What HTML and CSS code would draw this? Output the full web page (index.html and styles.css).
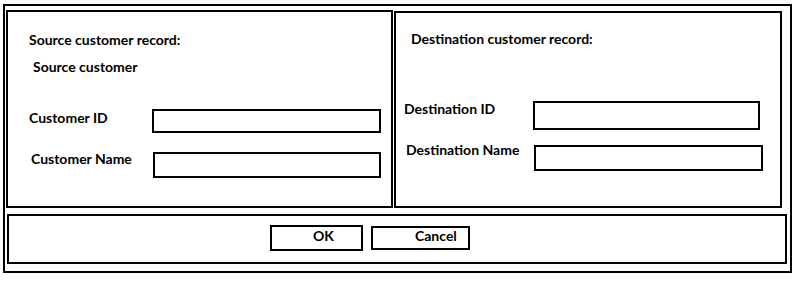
FILE: index.html
```html
<!DOCTYPE html>
<html lang="en">
<head>
<meta charset="UTF-8" />
<title>Merge customer records</title>
<link rel="stylesheet" href="styles.css">
</head>
<body>

<div class="dialog">
  <div class="panels">
    <div class="panel source">
      <div class="title">Source customer record:</div>
      <div class="subtitle">Source customer</div>
      <div class="row row-id">
        <label for="cust-id">Customer ID</label>
        <input type="text" id="cust-id">
      </div>
      <div class="row row-name">
        <label for="cust-name">Customer Name</label>
        <input type="text" id="cust-name">
      </div>
    </div>

    <div class="panel dest">
      <div class="title">Destination customer record:</div>
      <div class="row row-id">
        <label for="dest-id">Destination ID</label>
        <input type="text" id="dest-id">
      </div>
      <div class="row row-name">
        <label for="dest-name">Destination Name</label>
        <input type="text" id="dest-name">
      </div>
    </div>
  </div>

  <div class="actions">
    <button class="btn btn-ok">OK</button>
    <button class="btn btn-cancel">Cancel</button>
  </div>
</div>

</body>
</html>
```

FILE: styles.css
```css
* {
  box-sizing: border-box;
}
body {
  margin: 0;
  background: #fff;
  color: #000;
  font-family: 'Lato', 'Liberation Sans', sans-serif;
  font-weight: 700;
  font-size: 14px;
  line-height: 16px;
}
.dialog {
  width: 789px;
  height: 269px;
  margin: 4px 0 0 3px;
  border: 2px solid #000;
}
.panels {
  display: flex;
  align-items: flex-start;
}
.panel {
  border: 2px solid #000;
}
.source {
  width: 387px;
  height: 198px;
  margin: 4px 0 0 1px;
}
.dest {
  width: 388px;
  height: 197px;
  margin: 5px 0 0 1px;
}

.source .title {
  margin-top: 20px;
  padding-left: 21px;
}
.subtitle {
  margin-top: 11px;
  padding-left: 25px;
}
.dest .title {
  margin-top: 18px;
  padding-left: 15px;
}

.row {
  display: flex;
  align-items: flex-start;
}
.row input {
  border: 2px solid #000;
  background: #fff;
  padding: 0;
  margin: 0;
  font: inherit;
}

.source .row-id {
  margin-top: 34px;
  padding-left: 21px;
}
.source .row-id label {
  width: 123px;
  margin-top: 1px;
}
.source .row-id input {
  width: 229px;
  height: 24px;
}
.source .row-name {
  margin-top: 18px;
  padding-left: 23px;
}
.source .row-name label {
  width: 122px;
}
.source .row-name input {
  width: 228px;
  height: 26px;
  margin-top: 1px;
}

.dest .row-id {
  margin-top: 54px;
  padding-left: 8px;
}
.dest .row-id label {
  width: 129px;
}
.dest .row-id input {
  width: 227px;
  height: 29px;
}
.dest .row-name {
  margin-top: 12px;
  padding-left: 10px;
}
.dest .row-name label {
  width: 128px;
}
.dest .row-name input {
  width: 229px;
  height: 26px;
  margin-top: 3px;
}

.actions {
  display: flex;
  align-items: flex-start;
  width: 780px;
  height: 50px;
  margin: 6px 0 0 2px;
  border: 2px solid #000;
}
.btn {
  font: inherit;
  color: #000;
  background: #fff;
  border: 2px solid #000;
  border-radius: 0;
  text-align: left;
  padding: 0 0 4px 0;
  cursor: pointer;
}
.btn-ok {
  width: 93px;
  height: 26px;
  margin: 9px 0 0 261px;
  padding-left: 41px;
}
.btn-cancel {
  width: 99px;
  height: 24px;
  margin: 10px 0 0 8px;
  padding-left: 42px;
}
```
